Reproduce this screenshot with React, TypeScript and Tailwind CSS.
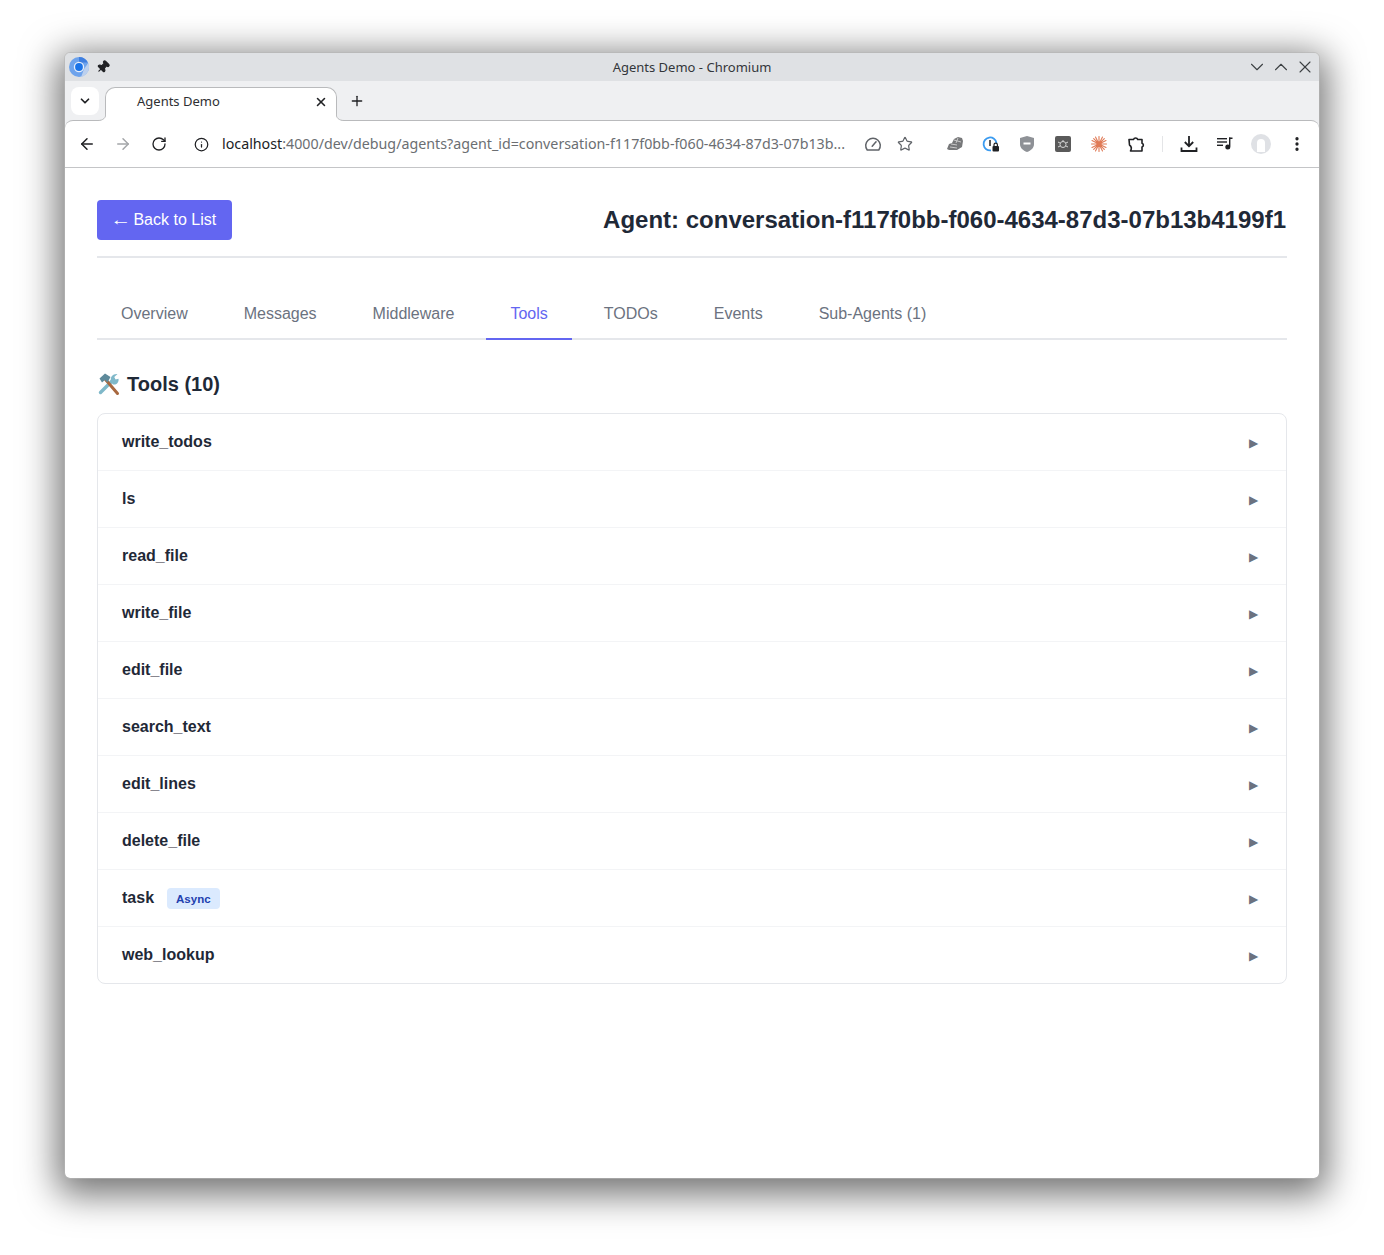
import { ArrowLeft, ArrowRight, ChevronDown, ChevronUp, Info, MoreVertical, Pin, Plus, RotateCw, Star, X } from 'lucide-react';

const tabs = ['Overview', 'Messages', 'Middleware', 'Tools', 'TODOs', 'Events', 'Sub-Agents (1)'];
const tools = ['write_todos', 'ls', 'read_file', 'write_file', 'edit_file', 'search_text', 'edit_lines', 'delete_file', 'task', 'web_lookup'];

function ChromeLogo() {
  return (
    <svg width="20" height="20" viewBox="0 0 20 20">
      <circle cx="10" cy="10" r="10" fill="#6ea3ec" />
      <path d="M10 0a10 10 0 0 1 9 5.6H10z" fill="#3f7fe0" />
      <path d="M19.2 6a10 10 0 0 1-7 13.8L15 12z" fill="#bcd0ee" />
      <circle cx="10" cy="10" r="5.2" fill="#e6eefb" />
      <circle cx="10" cy="10" r="3.9" fill="#1a73e8" />
    </svg>
  );
}

function Gauge() {
  return (
    <svg width="18" height="18" viewBox="0 0 18 18" fill="none" stroke="#5f6368" strokeWidth="1.5">
      <path d="M3.2 15h11.6a7.3 7.3 0 1 0-11.6 0z" strokeLinejoin="round" />
      <path d="M8.2 11.2 12 6.8" strokeLinecap="round" />
    </svg>
  );
}

function ExtensionIcons() {
  return (
    <div className="flex items-center">
      <div className="w-[36px] flex justify-center">
        <svg width="18" height="16" viewBox="0 0 18 16">
          <path d="M1 13 3 8l3-1 2-4 4-2 4 1 1 3-1 6-5 3H3z" fill="#77787a" />
          <path d="M5 8l6 1M4 11l7 1M8 4l7 2M12 2l-2 5" stroke="#c9c9c9" strokeWidth="1" fill="none" />
        </svg>
      </div>
      <div className="w-[36px] flex justify-center">
        <svg width="18" height="18" viewBox="0 0 18 18">
          <path d="M9 15.400A6.500 6.500 0 1 1 14.500 8" fill="none" stroke="#3b9bf0" strokeWidth="1.800" />
          <rect x="7.200" y="5" width="1.600" height="6" fill="#333333" />
          <rect x="10.500" y="11" width="6.500" height="5.500" rx="1" fill="#202124" />
          <path d="M12 11V9.800a1.700 1.700 0 0 1 3.400 0V11" fill="none" stroke="#202124" strokeWidth="1.200" />
        </svg>
      </div>
      <div className="w-[36px] flex justify-center">
        <svg width="14" height="16" viewBox="0 0 14 16">
          <path d="M7 0l7 2v6c0 4-3 6.500-7 8-4-1.500-7-4-7-8V2z" fill="#8e9196" />
          <rect x="3.500" y="6.500" width="7" height="2" fill="#ffffff" />
        </svg>
      </div>
      <div className="w-[36px] flex justify-center">
        <svg width="16" height="16" viewBox="0 0 16 16">
          <rect width="16" height="16" rx="2" fill="#5a5a5a" />
          <circle cx="8" cy="8.500" r="3" fill="none" stroke="#d5d5d5" strokeWidth="1" />
          <path d="M3 6l2 1M13 6l-2 1M3 11l2-1M13 11l-2-1M8 4v2" stroke="#d5d5d5" strokeWidth="1" />
        </svg>
      </div>
      <div className="w-[36px] flex justify-center">
        <svg width="16" height="16" viewBox="0 0 16 16" stroke="#e07a56" strokeWidth="1.100" strokeLinecap="round" fill="#e07a56">
          <path d="M8 0.500v15M0.500 8h15M2.700 2.700l10.600 10.600M13.300 2.700 2.700 13.300M4.500 1 11.500 15M11.500 1 4.500 15M1 4.500 15 11.500M15 4.500 1 11.500" />
          <circle cx="8" cy="8" r="1.500" stroke="none" />
        </svg>
      </div>
      <div className="w-[36px] flex justify-center">
        <svg width="18" height="18" viewBox="0 0 18 18" fill="none" stroke="#202124" strokeWidth="1.600" strokeLinejoin="round" className="ml-[1px]">
          <path d="M2 4.500h4.500a2.200 2.200 0 0 1 4.200 0H15v3.700a2 2 0 0 1 0 3.800V16H3.500c1.200-2 .9-4.500-1-6z" />
        </svg>
      </div>
    </div>
  );
}

function RightIcons() {
  return (
    <div className="flex items-center">
      <div className="w-[36px] flex justify-center">
        <svg width="18" height="18" viewBox="0 0 18 18" fill="none" stroke="#202124" strokeWidth="1.800">
          <path d="M9 1v10M4.800 7 9 11.200 13.200 7" />
          <path d="M1.500 12.500V16h15v-3.500" />
        </svg>
      </div>
      <div className="w-[36px] flex justify-center">
        <svg width="16" height="14" viewBox="0 0 16 14" fill="#202124">
          <rect y="1" width="10" height="1.400" />
          <rect y="4.300" width="10" height="1.400" />
          <rect y="7.600" width="6" height="1.400" />
          <rect x="12" y="0.500" width="3.500" height="1.500" />
          <rect x="12" y="0.500" width="1.400" height="9" />
          <circle cx="10.800" cy="10" r="2.500" />
        </svg>
      </div>
      <div className="w-[36px] flex justify-center">
        <div className="w-[20px] h-[20px] rounded-full bg-[#dfe1e5] flex items-center justify-center">
          <div className="w-[8px] h-[13px] mt-[3px] rounded-t-full bg-white" />
        </div>
      </div>
      <div className="w-[36px] flex justify-center">
        <MoreVertical size={18} strokeWidth={2.4} className="text-[#202124]" />
      </div>
    </div>
  );
}

function ToolsEmoji() {
  return (
    <svg width="24" height="24" viewBox="0 0 24 24" className="shrink-0">
      <path d="M3.500 20.500 16.500 7.500" stroke="#7fb8c9" strokeWidth="3.400" strokeLinecap="round" />
      <path d="M14 8.500c-1-3.500 2-7 6.500-6.500l-3.200 3 1.200 2.500 3-.8c.8 4-3 7-6 5.500z" fill="#7fb8c9" />
      <path d="M20.500 21.500 8.500 7.500" stroke="#a8683f" strokeWidth="3" strokeLinecap="round" />
      <path d="M2.500 6.500 8 1.500l5.500 3.500-3 5.500-2.500-2.500-3 2.500z" fill="#5e8a9b" />
    </svg>
  );
}

export default function App() {
  return (
    <div className="w-[1384px] h-[1255px] bg-white pl-[65px] pt-[53px] overflow-hidden font-['Liberation_Sans',Arial,sans-serif]">
      <div className="w-[1254px] h-[1125px] bg-white rounded-[5px] overflow-hidden flex flex-col shadow-[0_9px_36px_8px_rgba(0,0,0,0.55)] outline outline-1 outline-[#b5b5b5]/60">
        {/* title bar */}
        <div className="h-[28px] shrink-0 bg-[#dfe1e4] flex items-center px-[4px] font-['Noto_Sans',sans-serif]">
          <ChromeLogo />
          <Pin size={14} className="ml-[7px] rotate-45 text-[#202124] fill-[#202124]" />
          <div className="flex-1 text-center text-[13px] text-[#33363a] pt-[1px] ml-[28px]">Agents Demo - Chromium</div>
          <div className="flex items-center text-[#3c4043]">
            <ChevronDown size={22} strokeWidth={1.2} className="mr-[2px]" />
            <ChevronUp size={22} strokeWidth={1.2} className="mr-[3px]" />
            <X size={20} strokeWidth={1.3} />
          </div>
        </div>

        {/* tab strip */}
        <div className="h-[39px] shrink-0 bg-[#eff0f2] flex items-end pl-[6px] font-['Noto_Sans',sans-serif]">
          <div className="w-[28px] h-[28px] mb-[5px] rounded-[8px] bg-white flex items-center justify-center">
            <ChevronDown size={14} strokeWidth={3} className="text-[#202124]" />
          </div>
          <div className="relative z-10 -mb-px ml-[6px] w-[232px] h-[34px] bg-white border border-b-0 border-[#b9babc] rounded-t-[10px] flex items-center pb-[6px] pl-[31px] pr-[8px]">
            <span className="flex-1 text-[13px] text-[#2d2f32]">Agents Demo</span>
            <X size={14} strokeWidth={2.6} className="text-[#202124]" />
            <svg width="8" height="8" viewBox="0 0 8 8" className="absolute -right-[8px] bottom-[0px]">
              <path d="M0 0c0 5 3 7.500 8 7.500V8H0z" fill="#ffffff" />
              <path d="M0 0c0 5 3 7.500 8 7.500" fill="none" stroke="#b9babc" />
            </svg>
            <svg width="8" height="8" viewBox="0 0 8 8" className="absolute -left-[8px] bottom-[0px]">
              <path d="M8 0c0 5-3 7.500-8 7.500V8h8z" fill="#ffffff" />
              <path d="M8 0c0 5-3 7.500-8 7.500" fill="none" stroke="#b9babc" />
            </svg>
          </div>
          <div className="ml-[12px] mb-[11px]">
            <Plus size={16} strokeWidth={2} className="text-[#202124]" />
          </div>
        </div>

        {/* toolbar */}
        <div className="shrink-0 bg-[#eff0f2]">
          <div className="h-[48px] bg-white border-t border-b border-t-[#b9babc] border-b-[#c4c5c7] flex items-center pl-[13px] pr-[4px] font-['Noto_Sans',sans-serif] rounded-t-[8px]">
            <ArrowLeft size={18} strokeWidth={2} className="text-[#202124]" />
            <ArrowRight size={18} strokeWidth={2} className="ml-[18px] text-[#a4a6a9]" />
            <RotateCw size={16} strokeWidth={2} className="ml-[19px] text-[#202124]" />
            <Info size={15} strokeWidth={2} className="ml-[27px] text-[#202124]" />
            <div className="ml-[13px] w-[624px] text-[14.25px] whitespace-nowrap overflow-hidden text-[#6b6e72]">
              <span className="text-[#202124]">localhost</span>:4000/dev/debug/agents?agent_id=conversation-f117f0bb-f060-4634-87d3-07b13b...
            </div>
            <div className="ml-[18px]"><Gauge /></div>
            <Star size={16} strokeWidth={1.8} className="ml-[15px] text-[#5f6368]" />
            <div className="ml-[24px]"><ExtensionIcons /></div>
            <div className="ml-[9px] mr-[8px] w-px h-[16px] bg-[#e4e5e7]" />
            <RightIcons />
          </div>
        </div>

        {/* page */}
        <div className="flex-1 px-[32px] pt-[32px]">
          <div className="flex items-center justify-between pb-[16px] border-b-2 border-[#e5e7eb]">
            <button className="h-[40px] px-[16px] rounded-[4px] bg-[#6366f1] text-white text-[16px]">
              <span className="inline-block scale-x-[1.3]">←</span> Back to List
            </button>
            <h1 className="text-[24px] font-bold text-[#1f2937] pr-px">Agent: conversation-f117f0bb-f060-4634-87d3-07b13b4199f1</h1>
          </div>

          <div className="mt-[32px] flex gap-[8px] border-b-2 border-[#e5e7eb] h-[50px]">
            {tabs.map((t) => (
              <div
                key={t}
                className={
                  t === 'Tools'
                    ? 'h-[50px] px-[24px] flex items-center text-[16px] text-[#6366f1] border-b-2 border-[#6366f1]'
                    : 'h-[50px] px-[24px] flex items-center text-[16px] text-[#6b7280] border-b-2 border-transparent'
                }
              >
                {t}
              </div>
            ))}
          </div>

          <h2 className="mt-[32px] flex items-center gap-[6px] text-[20px] font-bold text-[#1f2937] leading-[24px]">
            <ToolsEmoji />
            Tools (10)
          </h2>

          <div className="mt-[17px] border border-[#e5e7eb] rounded-[8px]">
            {tools.map((t, i) => (
              <div
                key={t}
                className={
                  i === tools.length - 1
                    ? 'h-[56px] pl-[24px] pr-[28px] flex items-center justify-between'
                    : 'h-[57px] pl-[24px] pr-[28px] flex items-center justify-between border-b border-[#f3f4f6]'
                }
              >
                <div className="flex items-center gap-[13px]">
                  <span className="text-[16px] font-bold text-[#1f2937]">{t}</span>
                  {t === 'task' && (
                    <span className="pt-[3px] px-[9px] h-[21px] flex items-center rounded-[4px] bg-[#dbeafe] text-[#1e40af] text-[11.5px] font-bold">Async</span>
                  )}
                </div>
                <span className="text-[12px] text-[#6b7280] mt-[2px]">▶</span>
              </div>
            ))}
          </div>
        </div>
      </div>
    </div>
  );
}
